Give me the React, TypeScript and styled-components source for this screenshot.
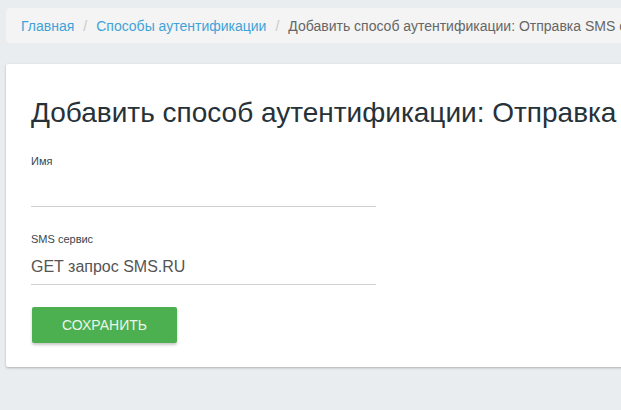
import React from "react"
import styled, { createGlobalStyle } from "styled-components"

const GlobalStyle = createGlobalStyle`
  html, body {
    margin: 0;
    padding: 0;
    background: #e9edf0;
    overflow: hidden;
  }
  body {
    font-family: "Liberation Sans", Arial, sans-serif;
  }
`

const App = () => {
  return (
    <Page>
      <GlobalStyle />
      <Breadcrumb>
        <Crumb href="#">Главная</Crumb>
        <Divider>/</Divider>
        <Crumb href="#">Способы аутентификации</Crumb>
        <Divider>/</Divider>
        <Current>Добавить способ аутентификации: Отправка SMS сообщения</Current>
      </Breadcrumb>
      <Card>
        <Title>Добавить способ аутентификации: Отправка SMS сообщения</Title>
        <Field>
          <Label>Имя</Label>
          <Input type="text" defaultValue="" />
        </Field>
        <Field>
          <Label>SMS сервис</Label>
          <Input type="text" defaultValue="GET запрос SMS.RU" />
        </Field>
        <SaveButton>Сохранить</SaveButton>
      </Card>
    </Page>
  )
}

const Page = styled.div`
  width: 1100px;
  padding: 8px 6px 40px;
  box-sizing: border-box;
`

const Breadcrumb = styled.nav`
  display: flex;
  align-items: center;
  height: 35px;
  padding: 0 15px;
  background: #f4f4f4;
  border-radius: 4px;
  font-size: 14px;
  white-space: nowrap;
`

const Crumb = styled.a`
  color: #3fa3d9;
  text-decoration: none;
`

const Divider = styled.span`
  color: #c8c8c8;
  padding: 0 9px;
`

const Current = styled.span`
  color: #666;
`

const Card = styled.div`
  margin-top: 21px;
  background: #fff;
  border-radius: 2px;
  box-shadow: 0 1px 3px rgba(0, 0, 0, 0.16), 0 1px 2px rgba(0, 0, 0, 0.1);
  padding: 32px 25px 24px;
`

const Title = styled.h1`
  margin: 0 0 25px;
  font-size: 28px;
  font-weight: 400;
  line-height: 1.2;
  color: #263238;
  white-space: nowrap;
`

const Field = styled.div`
  width: 345px;
  margin-bottom: 26px;
  &:last-of-type {
    margin-bottom: 22px;
  }
`

const Label = styled.label`
  display: block;
  font-size: 11px;
  line-height: 1.2;
  color: #37474f;
`

const Input = styled.input`
  display: block;
  width: 100%;
  height: 39px;
  box-sizing: border-box;
  padding: 4px 0 0;
  border: none;
  border-bottom: 1px solid #d0d0d0;
  outline: none;
  background: transparent;
  font-family: "Liberation Sans", Arial, sans-serif;
  font-size: 16px;
  color: #555;
`

const SaveButton = styled.button`
  display: block;
  width: 145px;
  height: 36px;
  margin-left: 1px;
  border: none;
  border-radius: 2px;
  background: #4caf50;
  color: #eaf6ea;
  font-family: "Liberation Sans", Arial, sans-serif;
  font-size: 14px;
  text-transform: uppercase;
  box-shadow: 0 2px 3px rgba(0, 0, 0, 0.22);
  cursor: pointer;
`

export default App
